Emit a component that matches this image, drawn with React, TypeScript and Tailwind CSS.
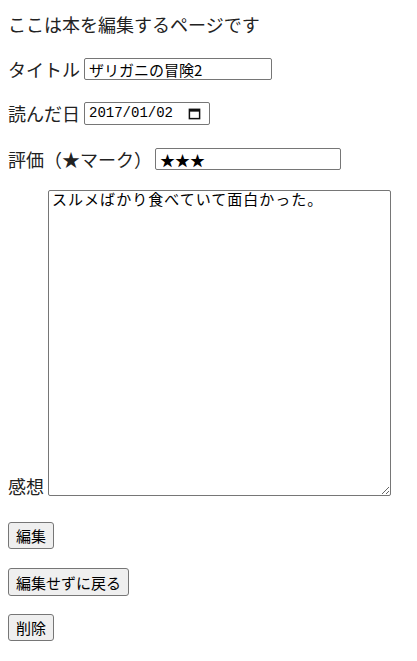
const sans = "font-['Noto_Sans_CJK_JP','Liberation_Sans',sans-serif]";
const mono = "font-['Liberation_Mono','Noto_Sans_CJK_JP',monospace]";

const inputCls =
  "h-[22px] border border-[#767676] rounded-[2px] px-[4px] text-[15px] leading-none text-black bg-white outline-none " +
  sans;

const btnCls =
  "border border-[#767676] rounded-[3px] bg-[#efefef] px-[7px] text-[15px] leading-none text-black " +
  sans;

const CalendarIcon: React.FC = () => (
  <svg width="13" height="13" viewBox="0 0 14 14" fill="none">
    <rect x="1.5" y="2.5" width="11" height="10" stroke="#111" strokeWidth="1.6" />
    <rect x="1.5" y="2.5" width="11" height="2.5" fill="#111" />
  </svg>
);

const App: React.FC = () => {
  return (
    <form className={"w-[417px] h-[661px] bg-white px-[8px] pt-[12px] text-[#222] text-[18px] " + sans}>
      <p className="h-[24px] flex items-center">ここは本を編集するページです</p>

      <div className="mt-[22px] h-[22px] flex items-center gap-[4px]">
        <span>タイトル</span>
        <input className={inputCls + " w-[188px]"} defaultValue="ザリガニの冒険2" />
      </div>

      <div className="mt-[22px] h-[23px] flex items-center gap-[4px]">
        <span>読んだ日</span>
        <div className="w-[126px] h-[23px] border border-[#767676] rounded-[2px] flex items-center justify-between pl-[4px] pr-[8px]">
          <span className={"text-[14px] text-black " + mono}>2017/01/02</span>
          <CalendarIcon />
        </div>
      </div>

      <div className="mt-[23px] h-[22px] flex items-center gap-[3px]">
        <span>評価（★マーク）</span>
        <input className={inputCls + " w-[186px]"} defaultValue="★★★" />
      </div>

      <div className="mt-[20px] flex items-end gap-[4px]">
        <span className="leading-none mb-[1px]">感想</span>
        <textarea
          className={"w-[343px] h-[306px] border border-[#767676] rounded-[2px] px-[3px] pt-[2px] text-[15px] tracking-[1px] leading-[18px] text-black resize-y outline-none " + mono}
          defaultValue="スルメばかり食べていて面白かった。"
        />
      </div>

      <div className="mt-[26px] flex flex-col items-start">
        <button type="button" className={btnCls + " h-[27px]"}>編集</button>
        <button type="button" className={btnCls + " h-[28px] mt-[19px]"}>編集せずに戻る</button>
        <button type="button" className={btnCls + " h-[27px] mt-[18px]"}>削除</button>
      </div>
    </form>
  );
};

export default App;
